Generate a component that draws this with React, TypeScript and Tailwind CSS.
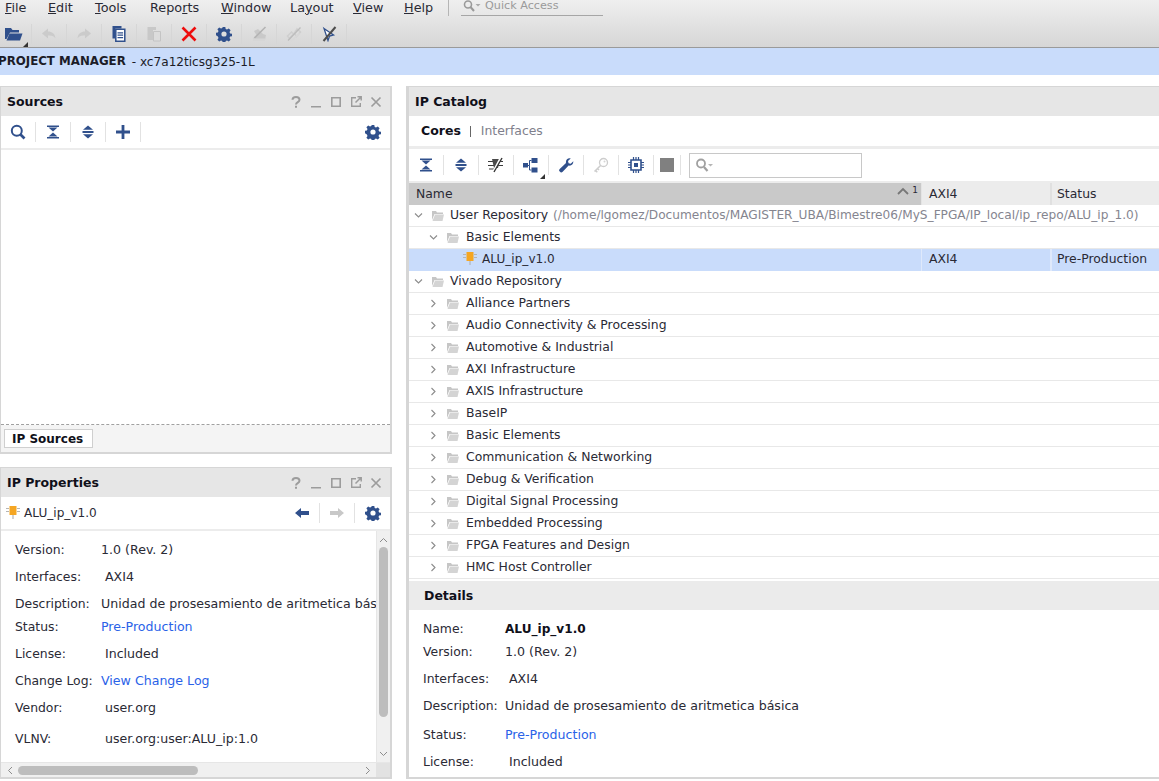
import type { ReactNode } from 'react';

const BLUE = '#30508c';
const GREY = '#c9c9c9';

function Svg({ children, size = 16 }: { children: ReactNode; size?: number }) {
  return (
    <svg width={size} height={size} viewBox="0 0 16 16" className="block shrink-0">
      {children}
    </svg>
  );
}

function Gear({ color = BLUE }: { color?: string }) {
  return (
    <Svg>
      <path
        fill={color}
        fillRule="evenodd"
        d="M6.7 1h2.600l.4 2 1.300.6 1.800-1.100 1.800 1.800-1.100 1.800.6 1.300 1.900.4v2.400l-1.900.4-.6 1.300 1.100 1.800-1.800 1.800-1.800-1.100-1.300.6-.4 1.900H6.700l-.4-1.900-1.300-.6-1.800 1.100-1.800-1.800 1.100-1.800-.6-1.300L0 9.200V6.800l1.900-.4.6-1.300-1.100-1.800 1.800-1.800L5 2.600l1.300-.6zM8 5.400a2.600 2.600 0 1 0 0 5.200 2.600 2.600 0 0 0 0-5.200z"
      />
    </Svg>
  );
}

function Search({ color = BLUE }: { color?: string }) {
  return (
    <Svg>
      <circle cx="6.800" cy="6.800" r="5" fill="none" stroke={color} strokeWidth="2" />
      <path d="M10.500 10.500l4 4" stroke={color} strokeWidth="2.600" />
    </Svg>
  );
}

function CollapseAll() {
  return (
    <Svg>
      <path fill={BLUE} d="M2 1.500h12v1.400H2zM3.500 3.400h9L8 7.400zM2 13.100h12v1.400H2zM3.500 12.600h9L8 8.600z" />
    </Svg>
  );
}

function ExpandAll() {
  return (
    <Svg>
      <path fill={BLUE} d="M8 1.500l5 4.300H3zM8 14.500l-5-4.300h10zM2.500 7h11v2h-11z" />
    </Svg>
  );
}

function Plus() {
  return (
    <Svg>
      <path fill={BLUE} d="M6.600 1h2.800v5.600H15v2.800H9.400V15H6.600V9.400H1V6.600h5.600z" />
    </Svg>
  );
}

function ArrowLeft({ color = BLUE, flip = false }: { color?: string; flip?: boolean }) {
  return (
    <Svg>
      <path fill={color} transform={flip ? 'matrix(-1 0 0 1 16 0)' : undefined} d="M1 8l6-5v3h8v4H7v3z" />
    </Svg>
  );
}

function CurveArrow({ flip = false }: { flip?: boolean }) {
  return (
    <Svg>
      <path
        fill="#cbcbcb"
        transform={flip ? 'matrix(-1 0 0 1 16 0)' : undefined}
        d="M1 7.500L7 2.500V5.500c4 0 7 2 7.500 7-1.500-2.500-3.500-3.300-7.500-3v3z"
      />
    </Svg>
  );
}

function Doc() {
  return (
    <Svg>
      <path fill={BLUE} d="M1.500 0h9v2.500H4.300V12.500H1.500z" />
      <path fill="#fff" stroke={BLUE} strokeWidth="1.500" d="M4.800 3.300h9v11.900h-9z" />
      <path stroke={BLUE} strokeWidth="1.200" d="M6.500 6.800h5.600M6.500 9.200h5.600M6.500 11.600h5.600" />
    </Svg>
  );
}

function Paste() {
  return (
    <Svg>
      <path fill="#c8c8c8" d="M1.500 1h8.500v3H7v10H1.500z" />
      <path fill="#dcdcdc" stroke="#c4c4c4" d="M7.500 5.500h7v9.500h-7z" />
    </Svg>
  );
}

function RedX() {
  return (
    <Svg>
      <path stroke="#ee0d0d" strokeWidth="2.600" d="M1.500 1.500l13 13M14.500 1.500l-13 13" />
    </Svg>
  );
}

function AutoConnect() {
  return (
    <Svg>
      <path fill={GREY} d="M3 5l4-2 5 5 3 1-1 5H2l1-3 3-1z" />
      <path stroke="#b4b4b4" strokeWidth="1.600" d="M14.500 1L3.500 12" />
      <path fill="#d6d6d6" d="M2 12.500h12V15H2z" />
    </Svg>
  );
}

function ChainOff() {
  return (
    <Svg>
      <path fill="none" stroke="#cfcfcf" strokeWidth="1.500" d="M1.500 10l4-4 2 2-4 4.500zM8.500 7l2.500-4 3.500 3-4 4.500z" />
      <path fill="none" stroke="#d8d8d8" strokeWidth="1.500" d="M4 13.500l1.500 1.500 8-8" />
      <path stroke="#bcbcbc" strokeWidth="1.300" d="M14.500 1.500L2 14.500" />
    </Svg>
  );
}

function CursorOff() {
  return (
    <Svg>
      <path fill="#fff" stroke={BLUE} strokeWidth="1.300" d="M3 2.500l9.500 6.500-4 1-1.500 4.500z" />
      <path stroke="#4c4c4c" strokeWidth="2" d="M14.500 1L2.500 15" />
    </Svg>
  );
}

function NoRoute() {
  return (
    <Svg>
      <path stroke="#3c3c3c" strokeWidth="1.200" d="M0 4.500h15M0 8.500h15M1 12h7" />
      <path fill="#4a4a4a" d="M4 2h8l-2 9H6z" />
      <path stroke="#fff" strokeWidth="2.400" d="M13 .5L5 15.500" />
      <path stroke="#333" strokeWidth="1.400" d="M14 1L6 15" />
    </Svg>
  );
}

function Hierarchy() {
  return (
    <div className="relative">
      <Svg>
        <path fill={BLUE} d="M0 6h5v4.500H0zM8.500 1h6v5h-6zM8.500 10.500h6v5h-6z" />
        <path stroke={BLUE} fill="none" d="M5 8.500h1.500V3.500h2M6.500 8.500v4.500h2" />
      </Svg>
      <div className="absolute -right-1.5 -bottom-1.5 border-l-[5px] border-b-[5px] border-l-transparent border-b-[#333]" />
    </div>
  );
}

function Wrench() {
  return (
    <Svg>
      <path
        fill={BLUE}
        d="M15.300 4.300c.3 2.700-2 4.900-4.700 4.200L4.700 14.700a1.900 1.900 0 0 1-2.900-.1 1.900 1.900 0 0 1-.1-2.700L8 6c-.6-2.900 1.900-5.300 4.700-4.500L10 4l.6 2.200 2.100.6z"
      />
    </Svg>
  );
}

function Key() {
  return (
    <Svg>
      <circle cx="10.500" cy="5.500" r="4" fill="none" stroke="#cdcdcd" strokeWidth="1.300" />
      <circle cx="11.500" cy="4.500" r="1" fill="#d5d5d5" />
      <path fill="none" stroke="#cdcdcd" strokeWidth="1.500" d="M7.800 8.200L1.500 14.500M2.500 13.500l1.800 1.800M4.500 11.500l1.500 1.500" />
    </Svg>
  );
}

function Chip() {
  return (
    <Svg>
      <path fill="none" stroke={BLUE} strokeWidth="1.600" d="M3 3h10v10H3z" />
      <path fill={BLUE} d="M6 6h4v4H6z" />
      <path stroke={BLUE} strokeWidth="1.200" d="M5.500 0v3M8 0v3M10.500 0v3M5.500 13v3M8 13v3M10.500 13v3M0 5.500h3M0 8h3M0 10.500h3M13 5.500h3M13 8h3M13 10.500h3" />
    </Svg>
  );
}

function FolderOpen() {
  return (
    <div className="relative">
      <svg width="20" height="18" viewBox="0 0 20 18" className="block">
        <path fill={BLUE} d="M1 3h6l1.500 2H15v2.500H6L2.500 14H1z" />
        <path fill={BLUE} d="M5.500 8.500H18.500L16 15.500H2.500z" />
      </svg>
      <div className="absolute -right-1 -bottom-1 border-l-[5px] border-b-[5px] border-l-transparent border-b-[#333]" />
    </div>
  );
}

function Folder() {
  return (
    <svg width="12" height="10" viewBox="0 0 12 10" className="block shrink-0">
      <path fill="#c6c6c6" d="M0 0h4l1 1.500h6V3H2.500L0 9z" />
      <path fill="#d4d4d4" d="M3 3.500h9L10.500 10H.5z" />
    </svg>
  );
}

function IpNode({ size = 14 }: { size?: number }) {
  return (
    <svg width={size} height={size} viewBox="0 0 14 14" className="block shrink-0">
      <path stroke="#b5b5b5" strokeWidth="1.200" d="M0 3.500h3M0 6.500h3M11 3.500h3M11 6.500h3M7 10v4" />
      <path fill="#f5a623" d="M3.500 1h7v9h-7z" />
    </svg>
  );
}

function Chevron({ open }: { open: boolean }) {
  return (
    <svg width="9" height="9" viewBox="0 0 9 9" className="block shrink-0">
      <path
        fill="none"
        stroke="#8c8c8c"
        strokeWidth="1.100"
        d={open ? 'M1 2.500l3.500 3.500L8 2.500' : 'M2.500 1L6 4.500 2.500 8'}
      />
    </svg>
  );
}

function Btn({ children, w = 35, sep = true, faint = false }: { children: ReactNode; w?: number; sep?: boolean; faint?: boolean }) {
  return (
    <div className="flex items-center h-[20px] shrink-0" style={{ width: w }}>
      <div className="flex-1 flex justify-center">{children}</div>
      {sep ? <div className={`w-px h-[20px] ${faint ? 'bg-[#d6d6d6]' : 'bg-[#e2e2e2]'}`} /> : null}
    </div>
  );
}

function WindowButtons() {
  return (
    <div className="ml-auto mr-[7px] flex items-center gap-[6px]">
      <svg width="14" height="14" viewBox="0 0 14 14" className="block">
        <path fill="none" stroke="#9c9c9c" strokeWidth="2" d="M3.500 4.800c0-3.800 7-3.800 7 0 0 2.500-3.500 2.200-3.500 4.700" />
        <path fill="#9c9c9c" d="M6 10.800h2v2H6z" />
      </svg>
      <svg width="14" height="14" viewBox="0 0 14 14" className="block">
        <path fill="#9c9c9c" d="M2 11h10v1.500H2z" />
      </svg>
      <svg width="14" height="14" viewBox="0 0 14 14" className="block">
        <path fill="none" stroke="#9c9c9c" strokeWidth="1.600" d="M2.800 2.800h8.400v8.400H2.800z" />
      </svg>
      <svg width="14" height="14" viewBox="0 0 14 14" className="block">
        <path fill="none" stroke="#9c9c9c" strokeWidth="1.400" d="M7 2.700H2.700v8.600h8.600V8" />
        <path stroke="#9c9c9c" strokeWidth="1.500" d="M6.500 7.500L12 2M8.500 1.800H12.200V5.500" fill="none" />
      </svg>
      <svg width="14" height="14" viewBox="0 0 14 14" className="block">
        <path stroke="#9c9c9c" strokeWidth="1.700" d="M2.500 2.500l9 9M11.500 2.500l-9 9" />
      </svg>
    </div>
  );
}

function PanelTitle({ title, buttons = false }: { title: string; buttons?: boolean }) {
  return (
    <div className="flex items-center shrink-0 bg-[#e6e6e6] pl-[6px] h-[29px]">
      <span className="font-bold text-[12.500px] text-[#10101a] pt-[1px]">{title}</span>
      {buttons ? <WindowButtons /> : null}
    </div>
  );
}

function Menu({ label, u, w }: { label: string; u: number; w: number }) {
  return (
    <span className="shrink-0" style={{ width: w }}>
      {label.slice(0, u)}
      <span className="underline">{label[u]}</span>
      {label.slice(u + 1)}
    </span>
  );
}

const categories = [
  'Alliance Partners',
  'Audio Connectivity & Processing',
  'Automotive & Industrial',
  'AXI Infrastructure',
  'AXIS Infrastructure',
  'BaseIP',
  'Basic Elements',
  'Communication & Networking',
  'Debug & Verification',
  'Digital Signal Processing',
  'Embedded Processing',
  'FPGA Features and Design',
  'HMC Host Controller',
];

function TreeRow({ level, open, children }: { level: number; open: boolean; children: ReactNode }) {
  return (
    <div className="flex items-center h-[22px] border-b border-[#e8e8e8] shrink-0 whitespace-nowrap">
      <div className={level === 0 ? 'w-[5px] shrink-0' : 'w-[20px] shrink-0'} />
      <Chevron open={open} />
      <div className="w-[9px] shrink-0" />
      <Folder />
      <div className={level === 0 ? 'w-[6px] shrink-0' : 'w-[7px] shrink-0'} />
      {children}
    </div>
  );
}

function PropRow({ label, h, valueLeft, children }: { label: string; h: number; valueLeft: number; children: ReactNode }) {
  return (
    <div className="flex items-center whitespace-nowrap shrink-0" style={{ height: h }}>
      <span className="shrink-0" style={{ width: valueLeft }}>
        {label}
      </span>
      <span className="text-[12.600px]">{children}</span>
    </div>
  );
}

export default function App() {
  return (
    <div className="w-[1159px] h-[781px] overflow-hidden bg-white flex flex-col text-[12.400px] text-[#2a2a35] font-['DejaVu_Sans',sans-serif]">
      <div className="h-[48px] shrink-0 border-b border-[#9a9a9a] bg-gradient-to-b from-[#efefef] to-[#d6d6d6]">
        <div className="h-[20px] flex items-center pl-[5px] pb-[5px] text-[12.800px]">
          <Menu label="File" u={0} w={43} />
          <Menu label="Edit" u={0} w={47} />
          <Menu label="Tools" u={0} w={55} />
          <Menu label="Reports" u={4} w={71} />
          <Menu label="Window" u={0} w={69} />
          <Menu label="Layout" u={2} w={63} />
          <Menu label="View" u={0} w={51} />
          <Menu label="Help" u={0} w={29} />
          <div className="w-px h-[18px] bg-[#b5b5b5] ml-[15px] mb-[2px]" />
          <div className="ml-[12px] w-[142px] h-[16px] border-b border-[#a6a6a6] flex items-center pl-[2px] text-[#9a9a9a] text-[11.200px]">
            <div className="-mt-[3px]">
              <svg width="18" height="12" viewBox="0 0 18 12" className="block">
                <circle cx="5" cy="4.500" r="3.500" fill="none" stroke="#9a9a9a" strokeWidth="1.600" />
                <path d="M7.500 7l3.500 4" stroke="#9a9a9a" strokeWidth="2" />
                <path d="M12.500 4h5l-2.500 2.500z" fill="#aaa" />
              </svg>
            </div>
            <span className="ml-[4px] -mt-[2px]">Quick Access</span>
          </div>
        </div>
        <div className="h-[27px] flex items-center -ml-[3px]">
          <Btn faint><FolderOpen /></Btn>
          <Btn faint><CurveArrow /></Btn>
          <Btn faint><CurveArrow flip /></Btn>
          <Btn faint><Doc /></Btn>
          <Btn faint><Paste /></Btn>
          <Btn faint><RedX /></Btn>
          <Btn faint><Gear /></Btn>
          <Btn faint><AutoConnect /></Btn>
          <Btn faint><ChainOff /></Btn>
          <Btn faint><CursorOff /></Btn>
        </div>
      </div>

      <div className="h-[27px] shrink-0 bg-[#c9dcfb] flex items-center -ml-[2px] pt-[1px] whitespace-nowrap text-[#1c1c28]">
        <span className="font-bold text-[11.800px]">PROJECT MANAGER</span>
        <span className="ml-[6px] text-[12.100px]">- xc7a12ticsg325-1L</span>
      </div>

      <div className="flex-1 min-h-0 flex pt-[11px] pb-[2px] bg-white">
        <div className="w-[392px] shrink-0 flex flex-col">
          <div className="h-[368px] shrink-0 border-2 border-l border-t-[1px] border-[#d6d6d6] flex flex-col">
            <PanelTitle title="Sources" buttons />
            <div className="h-[32px] shrink-0 bg-white flex items-center">
              <Btn><Search /></Btn>
              <Btn><CollapseAll /></Btn>
              <Btn><ExpandAll /></Btn>
              <Btn><Plus /></Btn>
              <div className="ml-auto mr-[9px]"><Gear /></div>
            </div>
            <div className="h-[2px] shrink-0 bg-[#ececec]" />
            <div className="flex-1 bg-white border-b border-dashed border-[#a0a0a0]" />
            <div className="h-[27px] shrink-0 bg-[#f4f4f4] flex items-center pl-[3px]">
              <div className="h-[19px] pl-[7px] pr-[9px] flex items-center bg-white border border-[#cfcfcf] font-bold text-[12px] text-[#10101a]">
                IP Sources
              </div>
            </div>
          </div>

          <div className="mt-[13px] flex-1 min-h-0 border-2 border-l border-t-[1px] border-[#d6d6d6] flex flex-col">
            <PanelTitle title="IP Properties" buttons />
            <div className="h-[32px] shrink-0 bg-white flex items-center pl-[5px]">
              <div className="-mt-[3px]"><IpNode /></div>
              <span className="ml-[4px] text-[12.100px]">ALU_ip_v1.0</span>
              <div className="ml-auto flex items-center">
                <Btn><ArrowLeft /></Btn>
                <Btn><ArrowLeft color="#c8c8c8" flip /></Btn>
                <Btn sep={false}><Gear /></Btn>
              </div>
            </div>
            <div className="h-[2px] shrink-0 bg-[#ececec]" />
            <div className="flex-1 min-h-0 flex">
              <div className="flex-1 min-w-0 overflow-hidden pl-[14px] pt-[6px] flex flex-col">
                <PropRow label="Version:" h={27} valueLeft={86}>1.0 (Rev. 2)</PropRow>
                <PropRow label="Interfaces:" h={27} valueLeft={90}>AXI4</PropRow>
                <PropRow label="Description:" h={27} valueLeft={86}>Unidad de prosesamiento de aritmetica básica</PropRow>
                <PropRow label="Status:" h={19} valueLeft={86}>
                  <span className="text-[#2a62e8]">Pre-Production</span>
                </PropRow>
                <PropRow label="License:" h={35} valueLeft={90}>Included</PropRow>
                <PropRow label="Change Log:" h={19} valueLeft={86}>
                  <span className="text-[#2a62e8]">View Change Log</span>
                </PropRow>
                <PropRow label="Vendor:" h={35} valueLeft={90}>user.org</PropRow>
                <PropRow label="VLNV:" h={27} valueLeft={90}>user.org:user:ALU_ip:1.0</PropRow>
              </div>
              <div className="w-[14px] shrink-0 bg-[#f0f0f0] flex flex-col items-center border-l border-[#e6e6e6]">
                <svg width="9" height="6" viewBox="0 0 9 6" className="block mt-[6px] shrink-0">
                  <path fill="none" stroke="#8c8c8c" d="M1 5l3.500-3.500L8 5" />
                </svg>
                <div className="w-[9px] h-[170px] mt-[4px] rounded-[5px] bg-[#bdbdbd]" />
                <svg width="9" height="6" viewBox="0 0 9 6" className="block mt-auto mb-[5px] shrink-0">
                  <path fill="none" stroke="#8c8c8c" d="M1 1l3.500 3.500L8 1" />
                </svg>
              </div>
            </div>
            <div className="h-[15px] shrink-0 bg-[#f0f0f0] flex items-center border-t border-[#e6e6e6]">
              <svg width="6" height="9" viewBox="0 0 6 9" className="block ml-[6px] shrink-0">
                <path fill="none" stroke="#8c8c8c" d="M5 1L1.500 4.500 5 8" />
              </svg>
              <div className="ml-[5px] w-[180px] h-[9px] rounded-[5px] bg-[#bdbdbd]" />
              <svg width="6" height="9" viewBox="0 0 6 9" className="block ml-[167px] shrink-0">
                <path fill="none" stroke="#8c8c8c" d="M1 1l3.500 3.500L1 8" />
              </svg>
              <div className="ml-auto w-[14px] h-full bg-[#e2e2e2]" />
            </div>
          </div>
        </div>

        <div className="ml-[14px] flex-1 min-w-0 border-l-[3px] border-t border-b-2 border-[#d6d6d6] flex flex-col">
          <PanelTitle title="IP Catalog" />
          <div className="h-[30px] shrink-0 bg-white flex items-center pl-[12px] pt-[1px]">
            <span className="font-bold text-[12.500px] text-[#10101a]">Cores</span>
            <span className="ml-[9px] mr-[10px] w-px h-[11px] bg-[#666]" />
            <span className="text-[#7f7f8c] text-[12.400px]">Interfaces</span>
          </div>
          <div className="h-[3px] shrink-0 bg-[#ececec]" />
          <div className="h-[32px] shrink-0 bg-white flex items-center">
            <Btn><CollapseAll /></Btn>
            <Btn><ExpandAll /></Btn>
            <Btn><NoRoute /></Btn>
            <Btn><Hierarchy /></Btn>
            <Btn><Wrench /></Btn>
            <Btn><Key /></Btn>
            <Btn><Chip /></Btn>
            <Btn w={27}>
              <div className="w-[14px] h-[14px] bg-[#808080]" />
            </Btn>
            <div className="ml-[8px] w-[173px] h-[25px] border border-[#c8c8c8] flex items-center pl-[5px]">
              <svg width="18" height="14" viewBox="0 0 18 14" className="block">
                <circle cx="6" cy="5.500" r="4" fill="none" stroke="#a0a0a0" strokeWidth="1.800" />
                <path d="M9 9l3.500 4" stroke="#a0a0a0" strokeWidth="2.200" />
                <path d="M13 6h5l-2.500 2.500z" fill="#b5b5b5" />
              </svg>
            </div>
          </div>
          <div className="h-[2px] shrink-0 bg-[#ececec]" />
          <div className="h-[22px] shrink-0 flex items-center">
            <div className="w-[512px] h-full bg-[#c9c9c9] flex items-center pl-[7px] pt-[1px] relative">
              Name
              <div className="absolute right-[3px] top-[1px] flex items-start gap-[3px]">
                <svg width="12" height="8" viewBox="0 0 12 8" className="block mt-[3px]">
                  <path fill="none" stroke="#777" strokeWidth="1.800" d="M1 7l5-5 5 5" />
                </svg>
                <span className="text-[9px] leading-[12px]">1</span>
              </div>
            </div>
            <div className="w-[129px] h-full bg-[#ececec] border-l border-[#e4e4e4] flex items-center pl-[7px] pt-[1px]">AXI4</div>
            <div className="flex-1 h-full bg-[#ececec] border-l-2 border-[#e0e0e0] flex items-center pl-[5px] pt-[1px]">Status</div>
          </div>
          <TreeRow level={0} open>
            <span>User Repository</span>
            <span className="ml-[5px] text-[12.170px] text-[#85858f]">(/home/lgomez/Documentos/MAGISTER_UBA/Bimestre06/MyS_FPGA/IP_local/ip_repo/ALU_ip_1.0)</span>
          </TreeRow>
          <TreeRow level={1} open>
            <span>Basic Elements</span>
          </TreeRow>
          <div className="h-[22px] shrink-0 flex items-center bg-[#c9dcfb] whitespace-nowrap">
            <div className="w-[512px] h-full flex items-center pl-[54px] pb-[1px]">
              <div className="-mt-[3px]"><IpNode /></div>
              <span className="ml-[5px] text-[12.100px]">ALU_ip_v1.0</span>
            </div>
            <div className="w-[129px] h-full border-l border-[#dfe9fb] flex items-center pl-[7px] pb-[1px]">AXI4</div>
            <div className="flex-1 h-full border-l-2 border-[#dfe9fb] flex items-center pl-[5px] pb-[1px]">Pre-Production</div>
          </div>
          <TreeRow level={0} open>
            <span>Vivado Repository</span>
          </TreeRow>
          {categories.map((c) => (
            <TreeRow key={c} level={1} open={false}>
              <span>{c}</span>
            </TreeRow>
          ))}
          <div className="h-[29px] mt-[2px] shrink-0 bg-[#ebebeb] flex items-center pl-[15px] pt-[1px] font-bold text-[12.500px] text-[#10101a]">
            Details
          </div>
          <div className="flex-1 min-h-0 overflow-hidden pl-[14px] pt-[8px] flex flex-col">
            <PropRow label="Name:" h={23} valueLeft={82}>
              <span className="font-bold text-[12.100px] text-[#10101a]">ALU_ip_v1.0</span>
            </PropRow>
            <PropRow label="Version:" h={23} valueLeft={82}>1.0 (Rev. 2)</PropRow>
            <PropRow label="Interfaces:" h={31} valueLeft={86}>AXI4</PropRow>
            <PropRow label="Description:" h={23} valueLeft={82}>Unidad de prosesamiento de aritmetica básica</PropRow>
            <PropRow label="Status:" h={35} valueLeft={82}>
              <span className="text-[#2a62e8]">Pre-Production</span>
            </PropRow>
            <PropRow label="License:" h={19} valueLeft={86}>Included</PropRow>
          </div>
        </div>
      </div>
    </div>
  );
}
